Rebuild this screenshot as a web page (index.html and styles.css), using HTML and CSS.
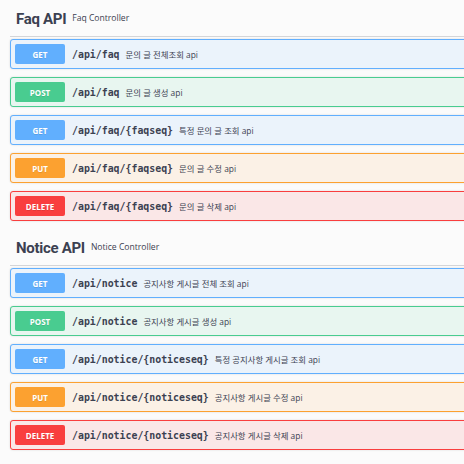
FILE: index.html
```html
<!DOCTYPE html>
<html lang="ko">
<head>
<meta charset="utf-8">
<link rel="stylesheet" href="styles.css">
</head>
<body>
<div class="wrapper">
  <section class="tag-section">
    <h3 class="tag"><span class="tag-name">Faq API</span><small class="tag-desc">Faq Controller</small></h3>
    <div class="ops">
      <div class="op get"><span class="method">GET</span><span class="path">/api/faq</span><span class="desc">문의 글 전체조회 api</span></div>
      <div class="op post"><span class="method">POST</span><span class="path">/api/faq</span><span class="desc">문의 글 생성 api</span></div>
      <div class="op get"><span class="method">GET</span><span class="path">/api/faq/{faqseq}</span><span class="desc">특정 문의 글 조회 api</span></div>
      <div class="op put"><span class="method">PUT</span><span class="path">/api/faq/{faqseq}</span><span class="desc">문의 글 수정 api</span></div>
      <div class="op delete"><span class="method">DELETE</span><span class="path">/api/faq/{faqseq}</span><span class="desc">문의 글 삭제 api</span></div>
    </div>
  </section>
  <section class="tag-section">
    <h3 class="tag"><span class="tag-name">Notice API</span><small class="tag-desc">Notice Controller</small></h3>
    <div class="ops">
      <div class="op get"><span class="method">GET</span><span class="path">/api/notice</span><span class="desc">공지사항 게시글 전체 조회 api</span></div>
      <div class="op post"><span class="method">POST</span><span class="path">/api/notice</span><span class="desc">공지사항 게시글 생성 api</span></div>
      <div class="op get"><span class="method">GET</span><span class="path">/api/notice/{noticeseq}</span><span class="desc">특정 공지사항 게시글 조회 api</span></div>
      <div class="op put"><span class="method">PUT</span><span class="path">/api/notice/{noticeseq}</span><span class="desc">공지사항 게시글 수정 api</span></div>
      <div class="op delete"><span class="method">DELETE</span><span class="path">/api/notice/{noticeseq}</span><span class="desc">공지사항 게시글 삭제 api</span></div>
    </div>
  </section>
</div>
</body>
</html>
```
FILE: styles.css
```css
html, body {
  margin: 0;
  padding: 0;
  background: #fbfbfb;
  overflow: hidden;
}
.wrapper {
  padding: 0 0 0 10px;
  font-family: "Open Sans", "Noto Sans CJK KR", sans-serif;
  color: #3b4151;
}
.tag-section {
  margin-bottom: 8px;
}
.tag {
  margin: 0 -10px 2px 0;
  height: 36px;
  box-sizing: content-box;
  padding: 0 0 0 6px;
  display: flex;
  align-items: center;
  border-bottom: 1px solid rgba(59, 65, 81, 0.2);
}
.tag-name {
  font-family: "Roboto", "Open Sans", sans-serif;
  font-weight: 700;
  font-size: 15px;
  letter-spacing: -0.3px;
  color: #3b4151;
  position: relative;
  top: 1px;
}
.tag-desc {
  font-family: "Open Sans", sans-serif;
  font-size: 8.6px;
  font-weight: 400;
  margin-left: 6px;
  color: #3b4151;
}
.ops {
  display: flex;
  flex-direction: column;
  gap: 8px;
  margin-right: -10px;
}
.op {
  display: flex;
  align-items: center;
  height: 28px;
  padding: 0 4px;
  border: 1px solid;
  border-radius: 3px;
  box-shadow: 0 0 2px rgba(0, 0, 0, 0.15);
}
.method {
  width: 50px;
  height: 20px;
  border-radius: 2px;
  display: flex;
  align-items: center;
  justify-content: center;
  color: #fff;
  font-family: "Open Sans", sans-serif;
  font-weight: 700;
  font-size: 8px;
  text-shadow: 0 1px 0 rgba(0, 0, 0, 0.1);
  flex: none;
}
.path {
  margin-left: 7px;
  font-family: "DejaVu Sans Mono", monospace;
  font-weight: 700;
  font-size: 9.9px;
  color: #3b4151;
}
.desc {
  margin-left: 6px;
  font-family: "Open Sans", "Noto Sans CJK KR", sans-serif;
  font-size: 8.4px;
  color: #3b4151;
}
.get { background: #ebf3fb; border-color: #61affe; }
.get .method { background: #61affe; }
.post { background: #e8f6f0; border-color: #49cc90; }
.post .method { background: #49cc90; }
.put { background: #fbf1e6; border-color: #fca130; }
.put .method { background: #fca130; }
.delete { background: #fae7e7; border-color: #f93e3e; }
.delete .method { background: #f93e3e; }
```
